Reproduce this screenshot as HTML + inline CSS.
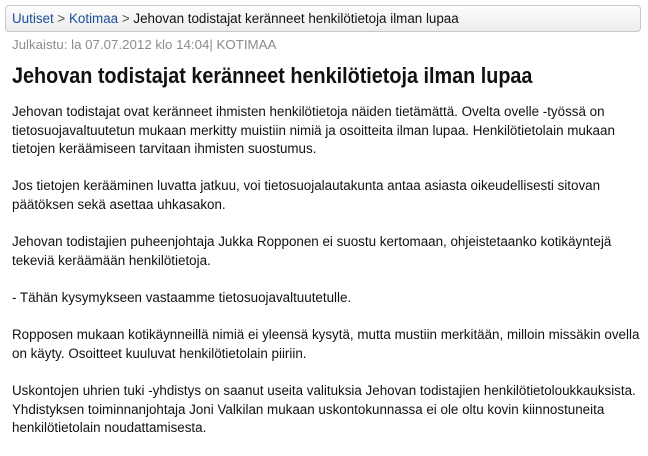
<!DOCTYPE html>
<html><head><meta charset="utf-8"><style>
body{margin:0;width:648px;height:443px;background:#fff;font-family:"Liberation Sans",sans-serif;overflow:hidden;position:relative}
.bc{position:absolute;left:5px;top:5px;width:636px;height:27px;border:1px solid #c8c8c8;border-radius:4px;background:linear-gradient(#fdfdfd,#ececec);box-sizing:border-box;font-size:13.4px;line-height:25px;padding-left:6px;color:#111;white-space:nowrap}
.bc a{color:#1a4f9a;text-decoration:none}
.bc .s{color:#555}
.meta{position:absolute;left:12px;top:37px;font-size:13.3px;color:#8c8c8c;white-space:nowrap}
h1{position:absolute;left:12px;top:62px;margin:0;font-size:22px;font-weight:bold;color:#111;white-space:nowrap;transform:scaleX(0.9);transform-origin:0 0;line-height:28px}
.body{position:absolute;left:12px;top:103px;font-size:13.4px;line-height:18.6px;color:#111;white-space:nowrap}
.body p{margin:0 0 18.6px 0}
</style></head><body>
<div class="bc"><a>Uutiset</a> <span class="s">&gt;</span> <a>Kotimaa</a> <span class="s">&gt;</span> Jehovan todistajat keränneet henkilötietoja ilman lupaa</div>
<div class="meta">Julkaistu: la 07.07.2012 klo 14:04| KOTIMAA</div>
<h1>Jehovan todistajat keränneet henkilötietoja ilman lupaa</h1>
<div class="body">
<p>Jehovan todistajat ovat keränneet ihmisten henkilötietoja näiden tietämättä. Ovelta ovelle -työssä on<br>tietosuojavaltuutetun mukaan merkitty muistiin nimiä ja osoitteita ilman lupaa. Henkilötietolain mukaan<br>tietojen keräämiseen tarvitaan ihmisten suostumus.</p>
<p>Jos tietojen kerääminen luvatta jatkuu, voi tietosuojalautakunta antaa asiasta oikeudellisesti sitovan<br>päätöksen sekä asettaa uhkasakon.</p>
<p>Jehovan todistajien puheenjohtaja Jukka Ropponen ei suostu kertomaan, ohjeistetaanko kotikäyntejä<br>tekeviä keräämään henkilötietoja.</p>
<p>- Tähän kysymykseen vastaamme tietosuojavaltuutetulle.</p>
<p>Ropposen mukaan kotikäynneillä nimiä ei yleensä kysytä, mutta mustiin merkitään, milloin missäkin ovella<br>on käyty. Osoitteet kuuluvat henkilötietolain piiriin.</p>
<p>Uskontojen uhrien tuki -yhdistys on saanut useita valituksia Jehovan todistajien henkilötietoloukkauksista.<br>Yhdistyksen toiminnanjohtaja Joni Valkilan mukaan uskontokunnassa ei ole oltu kovin kiinnostuneita<br>henkilötietolain noudattamisesta.</p>
</div>
</body></html>
